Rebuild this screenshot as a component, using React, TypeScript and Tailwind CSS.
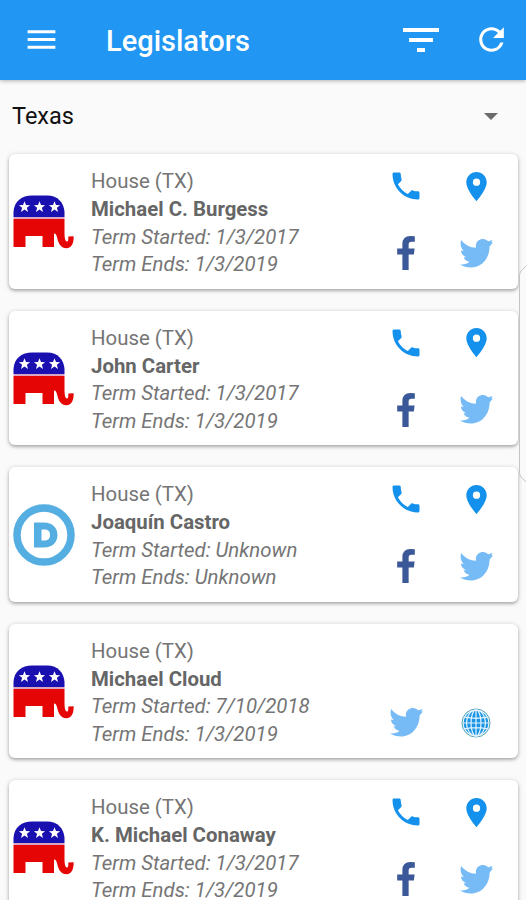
import type { ReactNode } from "react";
import { MdMenu, MdPhone, MdLocationOn, MdRefresh } from "react-icons/md";

type Legislator = {
    name: string;
    party: "R" | "D";
    started: string;
    ends: string;
    links: "full" | "web";
};

const legislators: Legislator[] = [
    { name: "Michael C. Burgess", party: "R", started: "1/3/2017", ends: "1/3/2019", links: "full" },
    { name: "John Carter", party: "R", started: "1/3/2017", ends: "1/3/2019", links: "full" },
    { name: "Joaquín Castro", party: "D", started: "Unknown", ends: "Unknown", links: "full" },
    { name: "Michael Cloud", party: "R", started: "7/10/2018", ends: "1/3/2019", links: "web" },
    { name: "K. Michael Conaway", party: "R", started: "1/3/2017", ends: "1/3/2019", links: "full" },
];

function Star({ x }: { x: number }) {
    return (
        <path
            transform={`translate(${x} 12)`}
            fill="#fff"
            d="M0-5.8 1.5-1.9 5.6-1.8 2.4.8 3.5 4.9 0 2.5-3.5 4.9-2.4.8-5.6-1.8-1.5-1.9Z"
        />
    );
}

function Elephant() {
    return (
        <svg viewBox="0 0 61 54" className="h-[54px] w-[61px]">
            <path fill="#1a10b0" d="M0.5 22V17C1 6 9 .5 19 .5H34C45 .5 51 8 51.5 17V22Z" />
            <path fill="#d9a5c4" d="M.5 22H51.5V24H.5Z" />
            <path
                fill="#e60505"
                d="M.5 24H51.5V37C51.5 42 52 46.5 54 46.5C55.5 46.5 55.3 44 55.3 41.5L60.6 41.2C61 48 58.5 53.2 53.5 53.2C48 53.2 45.5 48.5 44.5 44C43.8 40.5 43 38.5 41 38.5V52H29.5V41H12.5V52H.5Z"
            />
            <Star x={11.5} />
            <Star x={26.5} />
            <Star x={41.5} />
        </svg>
    );
}

function Donkey() {
    return (
        <svg viewBox="0 0 62 62" className="h-[62px] w-[62px]">
            <circle cx="31" cy="31" r="27" fill="none" stroke="#55aee2" strokeWidth="7.5" />
            <path
                fill="#55aee2"
                fillRule="evenodd"
                d="M21 18.500H31C39.500 18.500 44.500 24 44.500 31S39.500 43.500 31 43.500H21ZM28.500 25.500V36.500H31C35 36.500 37 35 37 31S35 25.500 31 25.500Z"
            />
        </svg>
    );
}

function Globe() {
    return (
        <svg viewBox="0 0 30 30" className="h-[30px] w-[30px]">
            <circle cx="15" cy="15" r="14" fill="#f4fbff" stroke="#4d9fb8" strokeWidth="1" />
            <circle cx="15" cy="15" r="12.3" fill="#1a93e3" />
            <g fill="none" stroke="#e4f5ff" strokeWidth="1.2">
                <path d="M15 2V28M2.5 15H27.5M4 9.2Q15 11.5 26 9.2M4 20.8Q15 18.5 26 20.8" />
                <ellipse cx="15" cy="15" rx="5" ry="13" />
                <ellipse cx="15" cy="15" rx="9.5" ry="13" />
            </g>
        </svg>
    );
}

function Facebook() {
    return (
        <svg viewBox="95 0 864 1664" className="h-[34px] w-[18px]" fill="#3b5998">
            <path d="M959 12v264h-157q-86 0-116 36t-30 108v189h293l-39 296h-254v759h-306v-759h-255v-296h255v-218q0-186 104-288.5t277-102.5q147 0 228 12z" />
        </svg>
    );
}

function Twitter() {
    return (
        <svg viewBox="0 0 33 29" className="h-[29px] w-[33px]" fill="#76bbf5">
            <path d="M1.200 1C5 6 10 8.500 16 8.800C15 3 19 0 23 0C25.200 0 27 1 28.300 2.300L32.500 1L31.300 3.600L33 3.400L29.600 7.500C29.600 19 22 28.500 11 28.500C7 28.500 3 27.500 0 25.500C4 26 7 24.800 9.500 22.800C6.500 22.500 4.500 20.500 3.600 18.200H6.300C3 17 1 14.500 1 11.500L3.800 12C1 9.500 -.3 5 1.200 1Z" />
        </svg>
    );
}

function Cell({ children }: { children?: ReactNode }) {
    return <div className="flex h-[67px] items-center justify-center">{children}</div>;
}

function Card({ person }: { person: Legislator }) {
    return (
        <div className="flex h-[134.5px] shrink-0 items-center rounded-md bg-white pl-1 shadow-[0_1px_5px_rgba(0,0,0,0.22),0_2px_3px_rgba(0,0,0,0.18)]">
            <div className="flex w-[78px] pt-0.5">{person.party === "R" ? <Elephant /> : <Donkey />}</div>
            <div className="flex-1 whitespace-nowrap pt-[5px] text-[20.4px] leading-[27.7px] text-[#757575]">
                <p>House (TX)</p>
                <p className="font-bold text-[#666666]">{person.name}</p>
                <p className="italic">Term Started: {person.started}</p>
                <p className="italic">Term Ends: {person.ends}</p>
            </div>
            <div className="mr-[7px] mb-[3px] grid w-[140px] grid-cols-2">
                {person.links === "full" ? (
                    <>
                        <Cell>
                            <MdPhone className="size-9 text-[#1491ec]" />
                        </Cell>
                        <Cell>
                            <MdLocationOn className="size-[35px] text-[#1491ec]" />
                        </Cell>
                        <Cell>
                            <Facebook />
                        </Cell>
                        <Cell>
                            <Twitter />
                        </Cell>
                    </>
                ) : (
                    <>
                        <Cell />
                        <Cell />
                        <Cell>
                            <Twitter />
                        </Cell>
                        <Cell>
                            <Globe />
                        </Cell>
                    </>
                )}
            </div>
        </div>
    );
}

export default function App() {
    return (
        <div className="relative flex h-[900px] w-full flex-col overflow-hidden bg-[#fafafa] font-['Roboto',sans-serif]">
            {/* App bar */}
            <header className="flex h-20 shrink-0 items-center bg-[#2196f3] pr-[16px] pl-[23px] text-white shadow-[0_1px_4px_rgba(0,0,0,0.3)]">
                <MdMenu className="mb-[2px] size-[37px]" />
                <h1 className="ml-[46px] flex-1 pt-1 text-[29px] font-medium">Legislators</h1>
                <svg viewBox="0 0 36 24" className="mr-[34px] h-6 w-9" fill="currentColor">
                    <path d="M0 0H36V4H0ZM6 10H30V14H6ZM14 20H22V24H14Z" />
                </svg>
                <MdRefresh className="mb-px size-[37px]" />
            </header>

            {/* State picker */}
            <div className="flex h-[74px] shrink-0 items-center justify-between pr-[28px] pl-3">
                <span className="text-[23.5px] text-[#111]">Texas</span>
                <svg viewBox="0 0 14 7" className="mb-[2px] h-[7px] w-3.5" fill="#6b6b6b">
                    <path d="M0 0H14L7 7Z" />
                </svg>
            </div>

            <main className="flex flex-col gap-[22px] pr-[8px] pl-[9px]">
                {legislators.map((person) => (
                    <Card key={person.name} person={person} />
                ))}
            </main>

            {/* Edge panel handle */}
            <svg viewBox="0 0 8 218" className="absolute top-[265px] right-0 h-[218px] w-2">
                <path d="M8 1L3 6Q1.500 8 1.500 11V207Q1.500 210 3 212L8 217" fill="#fafafa" stroke="#c4c4c4" strokeWidth="1" />
            </svg>
        </div>
    );
}
